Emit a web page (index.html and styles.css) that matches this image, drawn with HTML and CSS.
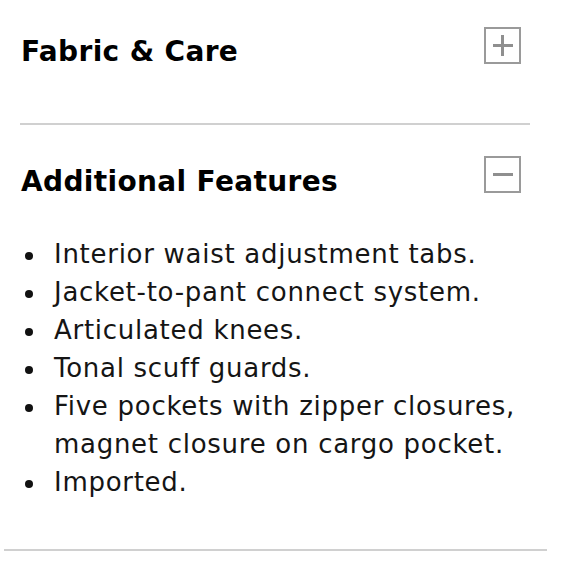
FILE: index.html
```html
<!DOCTYPE html>
<html lang="en">
<head>
<meta charset="utf-8">
<title>Details</title>
<link rel="stylesheet" href="styles.css">
</head>
<body>
<div class="acc">
  <section class="item item-first">
    <div class="item-head">
      <h2 class="item-title">Fabric &amp; Care</h2>
      <span class="toggle toggle-plus" aria-label="Expand"></span>
    </div>
  </section>
  <section class="item item-open">
    <div class="item-head">
      <h2 class="item-title">Additional Features</h2>
      <span class="toggle toggle-minus" aria-label="Collapse"></span>
    </div>
    <ul class="features">
      <li>Interior waist adjustment tabs.</li>
      <li>Jacket-to-pant connect system.</li>
      <li>Articulated knees.</li>
      <li>Tonal scuff guards.</li>
      <li>Five pockets with zipper closures, magnet closure on cargo pocket.</li>
      <li>Imported.</li>
    </ul>
  </section>
</div>
</body>
</html>
```
FILE: styles.css
```css
html, body {
  margin: 0;
  padding: 0;
  background: #fff;
}
body {
  font-family: "DejaVu Sans", "Open Sans", sans-serif;
  color: #111;
}
.acc {
  width: 580px;
}
.item {
  border-bottom: 2px solid #d0d0d0;
}
.item-first {
  margin: 0 50px 0 20px;
  padding: 27px 9px 53px 1px;
}
.item-open {
  margin: 0 33px 0 4px;
  padding: 31px 26px 48px 17px;
}
.item-head {
  display: flex;
  justify-content: space-between;
  align-items: flex-start;
}
.item-title {
  margin: 7px 0 0 0;
  font-size: 28px;
  line-height: 36px;
  font-weight: bold;
  letter-spacing: 0.35px;
  color: #000;
}
.item-open .item-title {
  margin-top: 8px;
}
.toggle {
  position: relative;
  width: 33px;
  height: 33px;
  border: 2px solid #9a9a9a;
  flex-shrink: 0;
}
.toggle::before,
.toggle::after {
  content: "";
  position: absolute;
  background: #8f8f8f;
}
.toggle::before {
  left: 7px;
  top: 15px;
  width: 20px;
  height: 3px;
}
.toggle-plus::after {
  left: 15px;
  top: 6px;
  width: 3px;
  height: 21px;
}
.toggle-minus::after {
  display: none;
}
.features {
  list-style: none;
  margin: 35px 0 0 0;
  padding: 0;
  font-size: 26px;
  line-height: 38px;
  letter-spacing: 0.72px;
  color: #151515;
}
.features li {
  display: flex;
  align-items: flex-start;
}
.features li::before {
  content: "";
  flex-shrink: 0;
  width: 8px;
  height: 8px;
  border-radius: 50%;
  background: #111;
  margin: 17px 21px 0 4px;
}
```
